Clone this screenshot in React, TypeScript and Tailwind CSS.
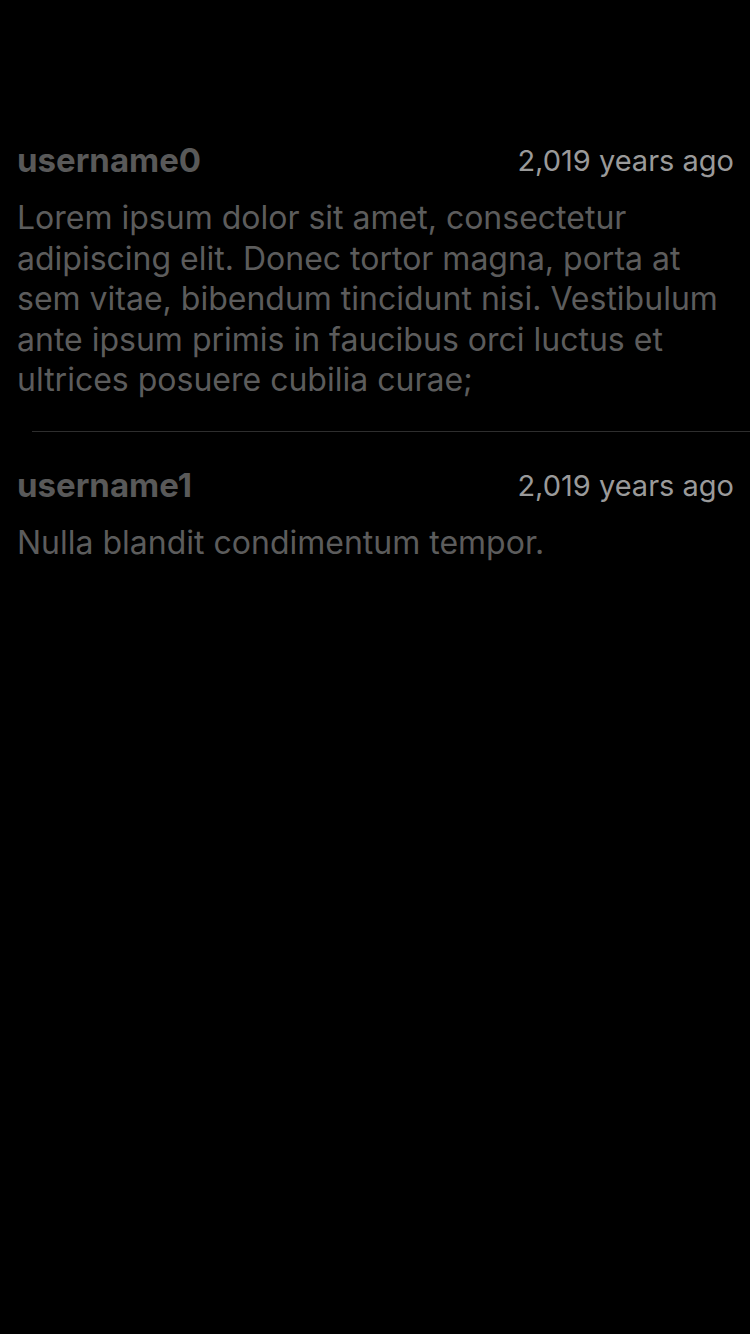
import React from "react";

const comments = [
  {
    user: "username0",
    time: "2,019 years ago",
    body: "Lorem ipsum dolor sit amet, consectetur adipiscing elit. Donec tortor magna, porta at sem vitae, bibendum tincidunt nisi. Vestibulum ante ipsum primis in faucibus orci luctus et ultrices posuere cubilia curae;",
  },
  {
    user: "username1",
    time: "2,019 years ago",
    body: "Nulla blandit condimentum tempor.",
  },
];

export default function App() {
  return (
    <div
      className="min-h-[1334px] w-[750px] bg-black pt-[136px]"
      style={{ fontFamily: "Inter, 'Noto Sans', sans-serif" }}
    >
      {comments.map((c, i) => (
        <div key={i}>
          {i > 0 && <div className="ml-8 h-px bg-[#2e2e2e]" />}
          <div className={i > 0 ? "pt-[29px] pl-[17px] pr-4 pb-[30px]" : "pl-[17px] pr-4 pb-[30px]"}>
            <div className="flex items-center justify-between h-[50px]">
              <span className="text-[33px] font-bold text-[#595959]">{c.user}</span>
              <span className="text-[29px] text-[#9a9a9a]">{c.time}</span>
            </div>
            <p className="mt-[12px] text-[32px] leading-[40.5px] text-[#5c5c5c]">{c.body}</p>
          </div>
        </div>
      ))}
    </div>
  );
}
